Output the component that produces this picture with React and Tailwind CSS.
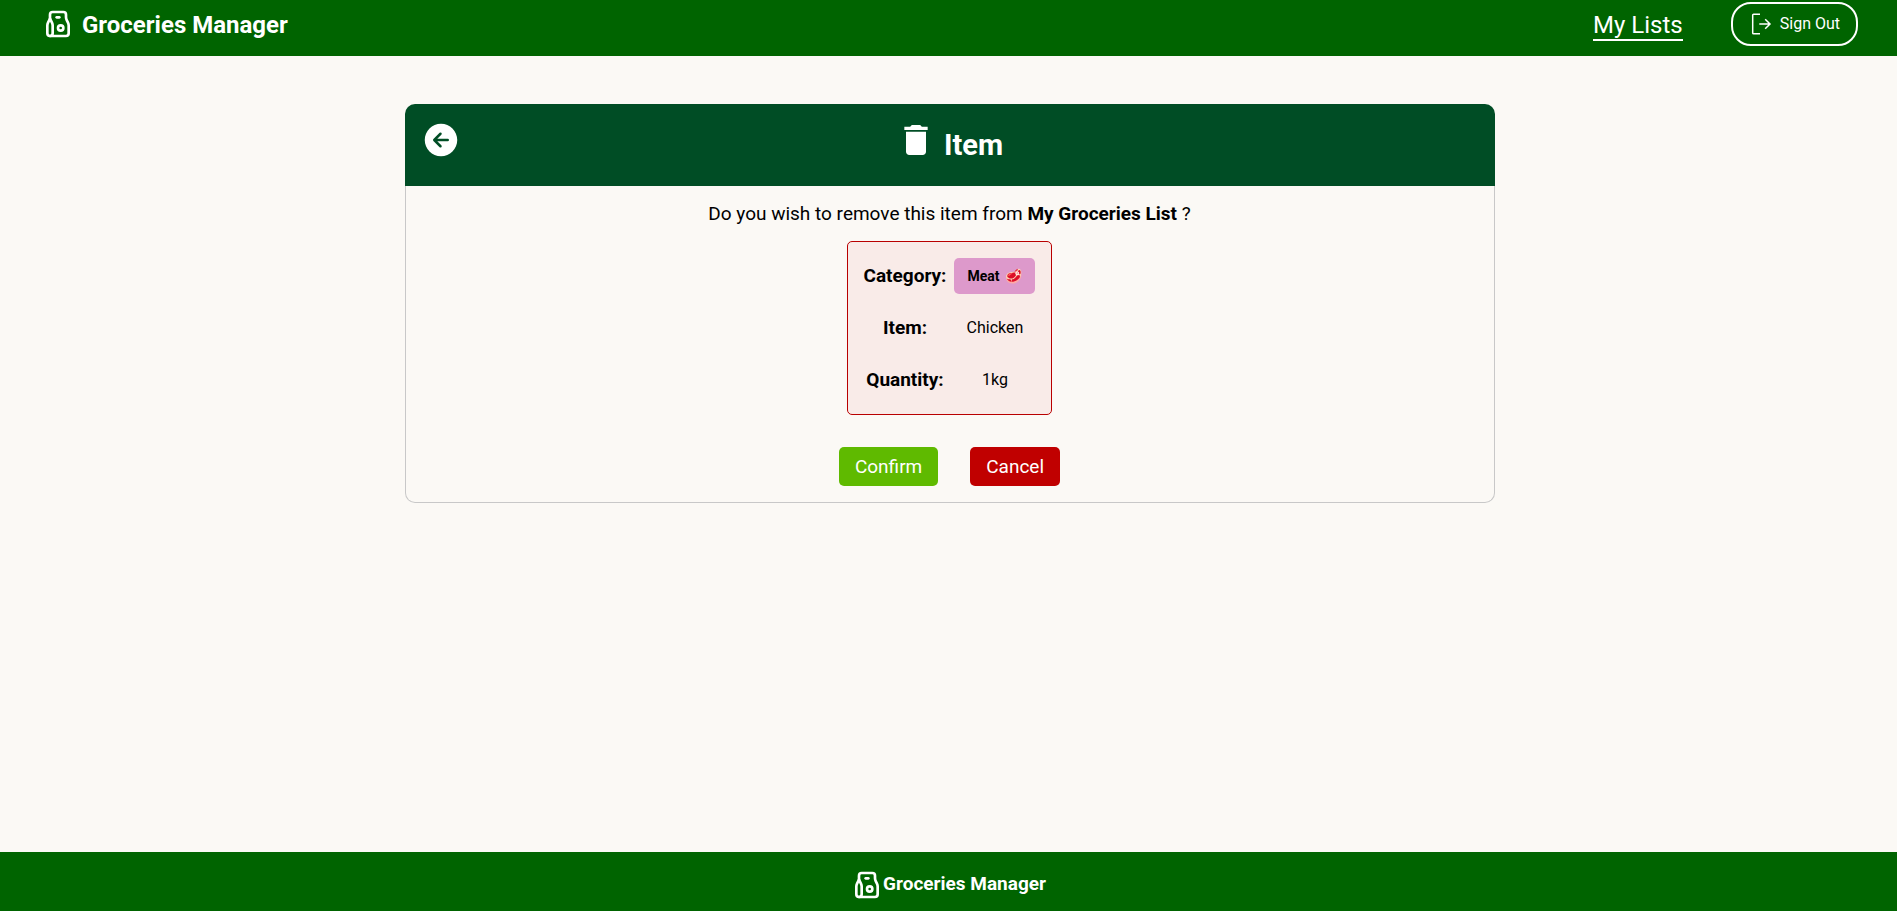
import { TbPaperBag } from "react-icons/tb";
import { IoArrowBackCircle } from "react-icons/io5";
import { MdDelete } from "react-icons/md";

function SignOutIcon() {
  return (
    <svg width="23" height="24" viewBox="0 0 23 24" fill="none" stroke="currentColor" strokeWidth="1.5" aria-hidden="true">
      <path d="M11 2.2H4.6Q3.7 2.2 3.7 3.1V20.9Q3.7 21.8 4.6 21.8H11M10.3 12H21M16.2 7.2L21 12L16.2 16.8" />
    </svg>
  );
}

const details = [
  { label: "Item:", value: "Chicken" },
  { label: "Quantity:", value: "1kg" },
];

export default function App() {
  return (
    <div className="flex min-h-screen flex-col bg-[#fbf9f5] font-['Roboto',sans-serif] text-black">
      <header className="flex h-14 items-start justify-between bg-[#006400] pr-[39px] pl-[42px] text-white">
        <a href="#home" className="flex h-12 items-center gap-2">
          <TbPaperBag size={32} />
          <span className="pt-0.5 text-2xl font-bold">Groceries Manager</span>
        </a>
        <nav className="flex h-12 items-center gap-12">
          <a href="#lists" className="mt-1 border-b-2 border-white text-2xl leading-7">My Lists</a>
          <button type="button" className="flex h-11 items-center gap-2 rounded-[20px] border-2 border-white px-4 text-base">
            <SignOutIcon />
            Sign Out
          </button>
        </nav>
      </header>

      <main className="flex-1 pt-12 pr-4 pl-[18px]">
        <section className="mx-auto max-w-[1090px]">
          <div className="grid grid-cols-[1fr_auto_1fr] items-start rounded-t-[10px] bg-[#004d25] p-4">
            <button type="button" aria-label="Back" className="justify-self-start text-white">
              <IoArrowBackCircle size={40} />
            </button>
            <h1 className="flex h-[50px] items-start gap-2 text-white">
              <MdDelete size={40} />
              <span className="pt-1 text-[29px] leading-[42px] font-bold">Item</span>
            </h1>
          </div>
          <div className="flex flex-col items-center rounded-b-[10px] border border-t-0 border-[#c8c8c8] pt-4 pb-4">
            <p className="text-[19px] leading-[23px]">
              Do you wish to remove this item from <strong className="font-bold">My Groceries List</strong> ?
            </p>
            <dl className="mt-4 grid grid-cols-[auto_auto] items-center justify-items-center gap-x-2 gap-y-4 rounded-[5px] border border-[#b90000] bg-[#f9ebe8] p-4">
              <dt className="text-[19px] leading-9 font-bold">Category:</dt>
              <dd className="flex h-9 items-center gap-1.5 rounded-[5px] bg-[#dd99cb] px-[13px] text-sm font-bold">
                Meat <span>🥩</span>
              </dd>
              {details.map((d) => (
                <div key={d.label} className="contents">
                  <dt className="text-[19px] leading-9 font-bold">{d.label}</dt>
                  <dd className="text-base">{d.value}</dd>
                </div>
              ))}
            </dl>
            <div className="mt-8 flex gap-8 text-[19px] leading-[23px] text-white">
              <button type="button" className="rounded-[5px] bg-[#5fba00] px-4 py-2">Confirm</button>
              <button type="button" className="rounded-[5px] bg-[#c00000] px-4 py-2">Cancel</button>
            </div>
          </div>
        </section>
      </main>

      <footer className="flex h-[59px] items-center justify-center bg-[#006400] pt-1.5 text-white">
        <TbPaperBag size={32} />
        <span className="text-[19px] font-bold">Groceries Manager</span>
      </footer>
    </div>
  );
}
